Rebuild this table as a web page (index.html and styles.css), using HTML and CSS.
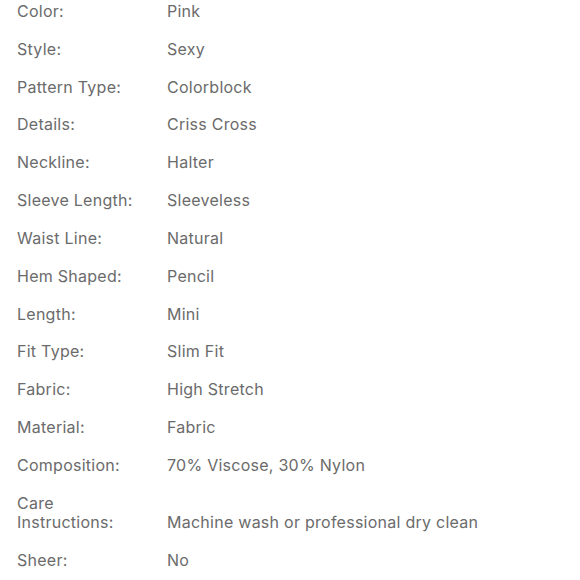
FILE: index.html
```html
<!DOCTYPE html>
<html>
<head>
<meta charset="utf-8">
<link rel="stylesheet" href="styles.css">
</head>
<body>
<dl class="specs">
  <div class="row"><dt>Color:</dt><dd>Pink</dd></div>
  <div class="row"><dt>Style:</dt><dd>Sexy</dd></div>
  <div class="row"><dt>Pattern Type:</dt><dd>Colorblock</dd></div>
  <div class="row"><dt>Details:</dt><dd>Criss Cross</dd></div>
  <div class="row"><dt>Neckline:</dt><dd>Halter</dd></div>
  <div class="row"><dt>Sleeve Length:</dt><dd>Sleeveless</dd></div>
  <div class="row"><dt>Waist Line:</dt><dd>Natural</dd></div>
  <div class="row"><dt>Hem Shaped:</dt><dd>Pencil</dd></div>
  <div class="row"><dt>Length:</dt><dd>Mini</dd></div>
  <div class="row"><dt>Fit Type:</dt><dd>Slim Fit</dd></div>
  <div class="row"><dt>Fabric:</dt><dd>High Stretch</dd></div>
  <div class="row"><dt>Material:</dt><dd>Fabric</dd></div>
  <div class="row"><dt>Composition:</dt><dd>70% Viscose, 30% Nylon</dd></div>
  <div class="row"><dt>Care Instructions:</dt><dd>Machine wash or professional dry clean</dd></div>
  <div class="row"><dt>Sheer:</dt><dd>No</dd></div>
</dl>
</body>
</html>
```
FILE: styles.css
```css
html, body {
  margin: 0;
  padding: 0;
  background: #ffffff;
}
body {
  font-family: Inter, "Noto Sans", sans-serif;
  font-size: 16px;
  line-height: 19px;
  letter-spacing: 0.26px;
  color: #6b6b6b;
}
.specs {
  margin: 0;
  padding: 2px 0 0 17px;
  display: flex;
  flex-direction: column;
  gap: 18.83px;
}
.row {
  display: flex;
  align-items: flex-end;
}
.row dt {
  width: 130px;
  margin-right: 20px;
  flex: none;
}
.row dd {
  margin: 0;
}
```
